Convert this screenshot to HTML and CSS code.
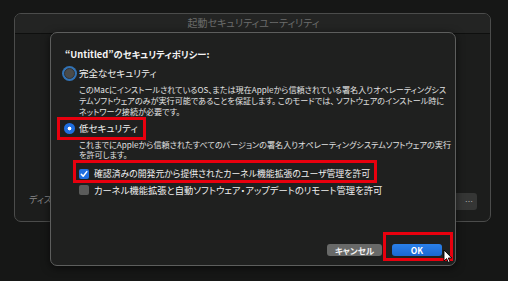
FILE: index.html
```html
<!DOCTYPE html>
<html lang="ja">
<head>
<meta charset="utf-8">
<link rel="stylesheet" href="styles.css">
</head>
<body>
<div class="window">
  <div class="titlebar">起動セキュリティユーティリティ</div>
  <div class="wbody">
    <div class="wlabel">ディスク</div>
    <div class="wbtn">…</div>
  </div>
</div>

<div class="sheet">
  <div class="heading">“Untitled”のセキュリティポリシー:</div>

  <div class="opt opt1">
    <span class="radio radio-off"></span>
    <span class="label">完全なセキュリティ</span>
  </div>
  <div class="desc desc1">このMacにインストールされているOS、または現在Appleから信頼されている署名入りオペレーティングシス<br>テムソフトウェアのみが実行可能であることを保証します。 このモードでは、 ソフトウェアのインストール時に<br>ネットワーク接続が必要です。</div>

  <div class="opt opt2">
    <span class="radio radio-on"></span>
    <span class="label">低セキュリティ</span>
  </div>
  <div class="desc desc2">これまでにAppleから信頼されたすべてのバージョンの署名入りオペレーティングシステムソフトウェアの実行<br>を許可します。</div>

  <div class="chk chk1">
    <span class="box box-on"><svg viewBox="0 0 10 10" width="10" height="10"><path d="M2.3 5.2 L4.2 7.3 L7.8 2.6" fill="none" stroke="#fff" stroke-width="1.5" stroke-linecap="round" stroke-linejoin="round"/></svg></span>
    <span class="label">確認済みの開発元から提供されたカーネル機能拡張のユーザ管理を許可</span>
  </div>
  <div class="chk chk2">
    <span class="box box-off"></span>
    <span class="label">カーネル機能拡張と自動ソフトウェア・アップデートのリモート管理を許可</span>
  </div>

  <div class="buttons">
    <div class="btn btn-cancel">キャンセル</div>
    <div class="btn btn-ok">OK</div>
  </div>

  <div class="mark mark1"></div>
  <div class="mark mark2"></div>
  <div class="mark mark3"></div>
</div>

<svg class="cursor" viewBox="0 0 10 15" width="10" height="15"><path d="M1 1 L1 12 L3.6 9.6 L5.4 13.6 L7 12.9 L5.3 9 L8.8 9 Z" fill="#fff" stroke="#000" stroke-width="0.9" stroke-linejoin="round"/></svg>
</body>
</html>
```

FILE: styles.css
```css
html, body {
  margin: 0;
  padding: 0;
}
body {
  width: 508px;
  height: 281px;
  overflow: hidden;
  position: relative;
  background: #161716;
  font-family: "Noto Sans CJK JP", "Noto Sans", sans-serif;
  font-feature-settings: "palt";
  color: #ececec;
}
.window {
  margin: 13px 0 0 14px;
  width: 475px;
  height: 207px;
  border: 1px solid #4b4c4b;
  border-radius: 7px;
  background: #1c1d1c;
  display: flex;
  flex-direction: column;
  overflow: hidden;
}
.titlebar {
  height: 19px;
  line-height: 18px;
  border-bottom: 1px solid #0e0f0e;
  background: #232423;
  text-align: center;
  font-size: 10px;
  color: #6c6d6c;
  padding-left: 2px;
}
.wbody {
  flex: 1;
  display: flex;
  align-items: flex-end;
  justify-content: space-between;
  padding: 0 13px 11px 14px;
}
.wlabel {
  font-size: 9px;
  line-height: 13px;
  color: #8a8a8a;
  margin-bottom: 4px;
}
.wbtn {
  width: 40px;
  height: 17px;
  background: #353635;
  border-radius: 3px;
  font-size: 8px;
  color: #aaa;
  text-align: right;
  padding-right: 4px;
  box-sizing: border-box;
  line-height: 17px;
}
.sheet {
  position: absolute;
  left: 50px;
  top: 32px;
  width: 406px;
  height: 234px;
  border: 1px solid #5d5e5d;
  border-radius: 7px;
  background: #1f201f;
  box-shadow: 0 2px 8px rgba(0,0,0,0.6);
  padding: 0 0 0 14px;
  box-sizing: border-box;
}
.heading {
  margin-top: 14px;
  font-size: 9.3px;
  font-weight: bold;
  line-height: 14px;
  color: #f4f4f4;
}
.opt {
  display: flex;
  align-items: center;
  height: 14px;
}
.opt1 { margin-top: 5px; }
.opt2 { margin-top: 4px; }
.label {
  font-size: 9.5px;
  line-height: 14px;
  color: #f0f0f0;
  white-space: nowrap;
}
.chk1 .label { font-size: 8.85px; }
.chk2 .label { font-size: 9.3px; }
.radio {
  width: 11px;
  height: 11px;
  border-radius: 50%;
  box-sizing: border-box;
  margin-right: 4px;
  margin-left: -1px;
  flex: none;
}
.radio-off {
  background: #4a4b4a;
  border: 1px solid #333;
  box-shadow: 0 0 0 2px #3272b4;
}
.radio-on {
  background: #1f6fe0 radial-gradient(circle, #fff 0 1.6px, transparent 2.2px);
}
.desc {
  margin-left: 14px;
  font-size: 8.1px;
  line-height: 11px;
  color: #e2e2e2;
  white-space: nowrap;
}
.desc1 { margin-top: 4px; }
.desc2 { margin-top: 5px; line-height: 10px; }
.chk {
  display: flex;
  align-items: center;
  height: 14px;
  margin-left: 14px;
}
.chk1 { margin-top: 7px; }
.chk2 { margin-top: 2px; }
.box {
  width: 10px;
  height: 10px;
  border-radius: 2px;
  margin-right: 5px;
  flex: none;
  display: flex;
}
.box-on { background: #1f6fe0; }
.box-off { background: #5a5b5a; }
.buttons {
  display: flex;
  justify-content: flex-end;
  gap: 10px;
  margin-top: 47px;
  padding-right: 13px;
}
.btn {
  height: 12px;
  line-height: 12px;
  border-radius: 3px;
  font-size: 8.5px;
  font-weight: bold;
  text-align: center;
  color: #fff;
}
.btn-cancel {
  width: 55px;
  background: #686968;
  color: #f2f2f2;
}
.btn-ok {
  width: 50px;
  background: linear-gradient(#2a80ea, #1a68d0);
}
.mark {
  position: absolute;
  border: 3px solid #e8000e;
  box-sizing: border-box;
}
.mark1 { left: 6px; top: 84px; width: 89px; height: 23px; }
.mark2 { left: 22px; top: 127px; width: 304px; height: 23px; }
.mark3 { left: 332px; top: 199px; width: 70px; height: 29px; }
.cursor {
  position: absolute;
  left: 443px;
  top: 249px;
}
```
